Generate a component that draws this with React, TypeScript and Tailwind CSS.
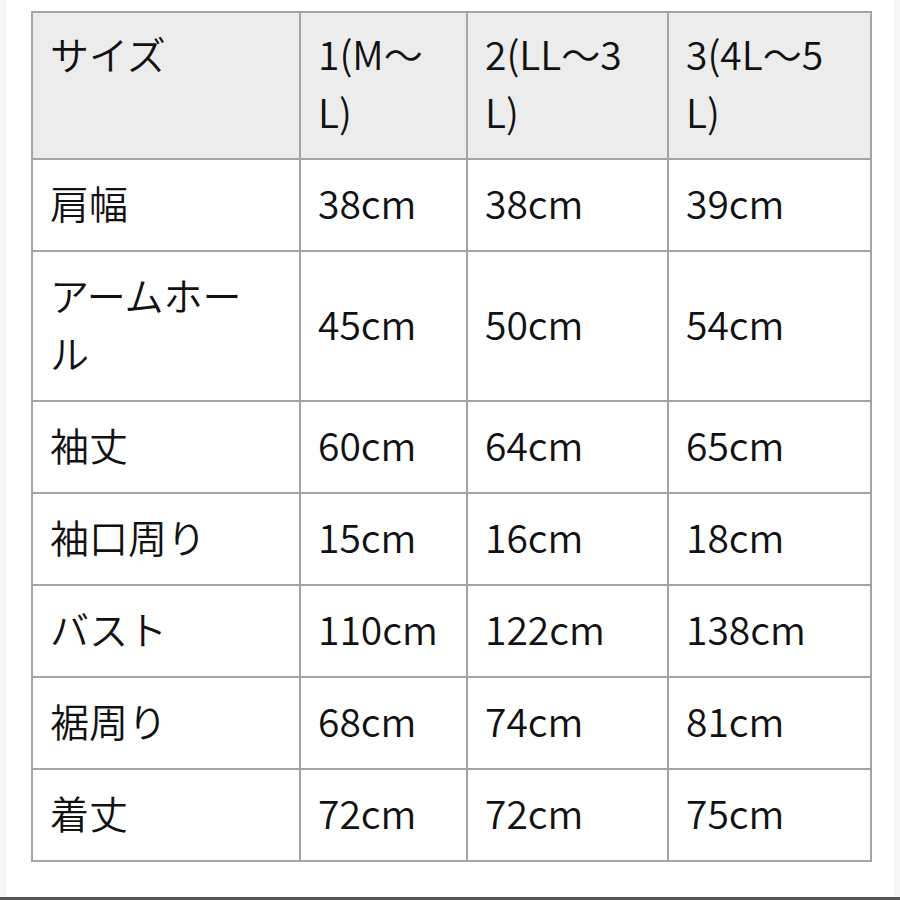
const rows: { label: React.ReactNode; values: string[] }[] = [
  { label: '肩幅', values: ['38cm', '38cm', '39cm'] },
  { label: <>アームホー<br />ル</>, values: ['45cm', '50cm', '54cm'] },
  { label: '袖丈', values: ['60cm', '64cm', '65cm'] },
  { label: '袖口周り', values: ['15cm', '16cm', '18cm'] },
  { label: 'バスト', values: ['110cm', '122cm', '138cm'] },
  { label: '裾周り', values: ['68cm', '74cm', '81cm'] },
  { label: '着丈', values: ['72cm', '72cm', '75cm'] },
];

const cell = 'border-2 border-[#a4a4a4] px-[17px] align-middle whitespace-nowrap';
const td = cell + ' pt-[13px] pb-[19px]';
const th = cell + ' pt-[11px] pb-[18px] align-top font-[350]';

export default function App() {
  return (
    <div className="flex h-[900px] w-[900px] flex-col bg-[#f6f6f6] font-['Noto_Sans_CJK_JP','Noto_Sans',sans-serif] text-[39px] font-[350] leading-[58px] text-[#111]">
      <div className="mx-[6px] flex-1 bg-white pl-[25px] pt-[11px]">
        <table className="w-[839px] table-fixed border-collapse">
          <colgroup>
            <col className="w-[268px]" />
            <col className="w-[167px]" />
            <col className="w-[201px]" />
            <col className="w-[203px]" />
          </colgroup>
          <thead>
            <tr className="bg-[#ececec] text-left">
              <th className={th}>サイズ</th>
              <th className={th}>1(M～<br />L)</th>
              <th className={th}>2(LL～3<br />L)</th>
              <th className={th}>3(4L～5<br />L)</th>
            </tr>
          </thead>
          <tbody>
            {rows.map((r, i) => (
              <tr key={i}>
                <td className={td}>{r.label}</td>
                {r.values.map((v, j) => (
                  <td key={j} className={td}>{v}</td>
                ))}
              </tr>
            ))}
          </tbody>
        </table>
      </div>
      <div className="h-[3px] bg-[#555]" />
    </div>
  );
}
